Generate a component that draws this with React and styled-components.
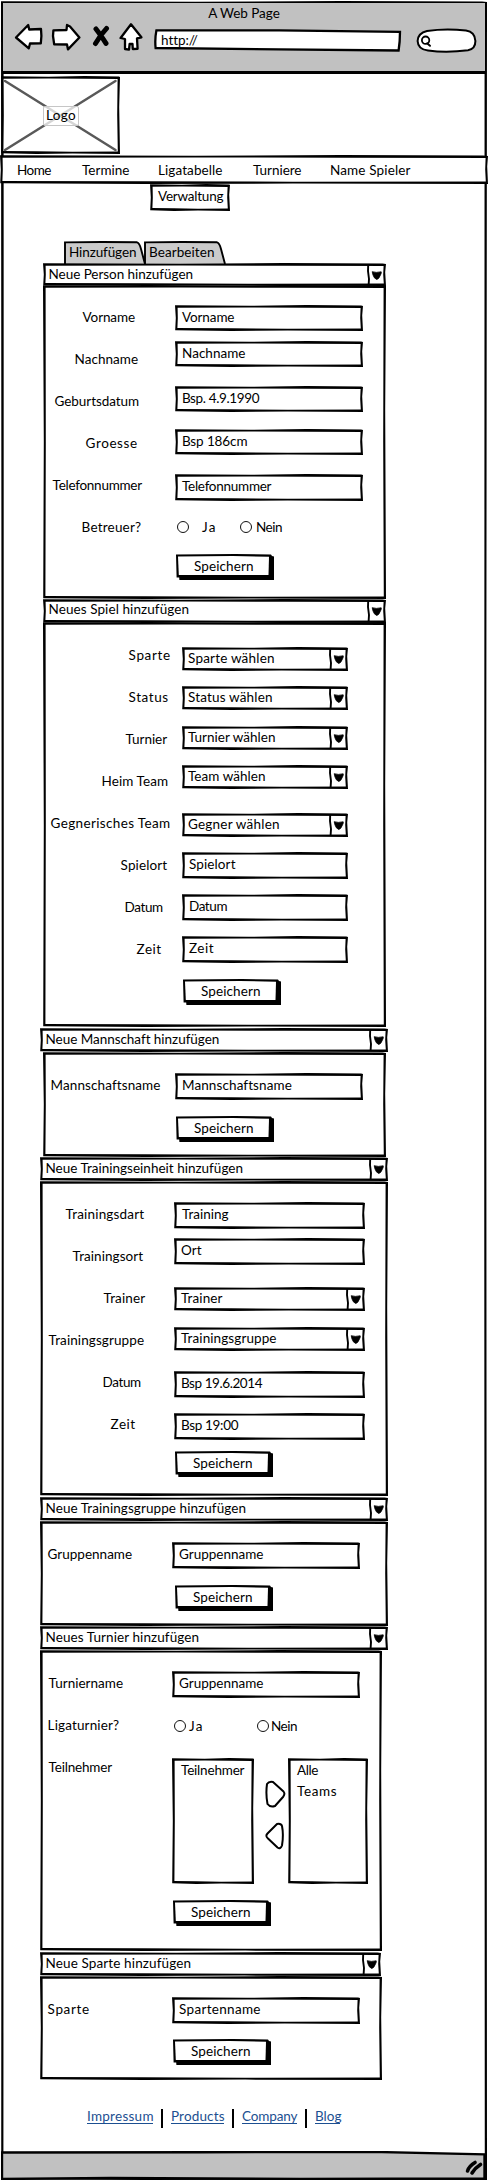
import React, { useLayoutEffect, useRef, useState } from "react";
import styled, { createGlobalStyle, css } from "styled-components";

const INK = "#000";
const CHROME = "#c1c1c1";

const GlobalStyle = createGlobalStyle`
  * { box-sizing: border-box; }
  body { margin: 0; background: #fff; }
  #root {
    font-family: Lato, "Open Sans", sans-serif;
    font-size: 13.5px;
    line-height: 16px;
    color: #000;
  }
`;

/* A slightly uneven hand-inked outline around a filled box. */
const inked = css`
  isolation: isolate;
  position: relative;
  &::before, &::after { content: ""; position: absolute; inset: 0; z-index: -1; }
  &::before {
    background: ${INK};
    clip-path: polygon(0 0.3px, 40% 0.8px, 70% 0, 99% 0.5px, 100% 1px, calc(100% - 0.8px) 40%, 100% 100%, 60% calc(100% - 0.4px), 30% 100%, 0.2px calc(100% - 0.8px), 0.8px 50%);
  }
  &::after {
    background: ${(p) => p.$fill || "#fff"};
    clip-path: polygon(2.6px 2.8px, 40% 2.4px, 70% 2.8px, calc(100% - 2.4px) 3px, calc(100% - 2.8px) 50%, calc(100% - 2.2px) calc(100% - 2.6px), 60% calc(100% - 2.3px), 30% calc(100% - 2.7px), 2.4px calc(100% - 3px), 2.8px 50%);
  }
`;

const Glyphs = styled.span`
  display: inline-block;
  flex: none;
  white-space: pre;
`;

/* Text tracked out to a given width. */
function Text({ w, children }) {
  const ref = useRef(null);
  const [tracking, setTracking] = useState(0);
  useLayoutEffect(() => {
    const natural = ref.current.getBoundingClientRect().width;
    setTracking((w + 1.5 - natural) / (String(children).length - 1));
  }, [w, children]);
  return <Glyphs ref={ref} style={{ letterSpacing: tracking }}>{children}</Glyphs>;
}

const Page = styled.div`
  ${inked}
  width: 488px;
  height: 2180px;
  display: flex;
  flex-direction: column;
  align-items: flex-start;
  &::before, &::after { inset: 1px 1px 0 1px; }
`;

const Chrome = styled.header`
  width: 482px;
  height: 71px;
  margin: 3px 3px 0;
  background: ${CHROME};
  border-bottom: 3px solid ${INK};
  display: flex;
  flex-direction: column;
`;

const Title = styled.div`
  height: 16px;
  margin-top: 2px;
  display: flex;
  justify-content: center;
`;

const Toolbar = styled.div`
  display: flex;
  align-items: flex-start;
  margin-left: 11px;
`;

const ToolIcon = styled.svg`
  flex: none;
  display: block;
  width: ${(p) => p.$w}px;
  height: 30px;
  margin-right: ${(p) => p.$gap}px;
  fill: #fff;
  stroke: ${INK};
  stroke-width: 2.3;
  stroke-linejoin: round;
  stroke-linecap: round;
`;

const Address = styled.svg`
  display: block;
`;

const UrlBar = styled.div`
  isolation: isolate;
  position: relative;
  width: 248px;
  height: 23px;
  margin: 8px 14px 0 0;
  padding: 3px 0 0 7px;
  > svg { position: absolute; inset: 0; z-index: -1; }
`;

const SearchPill = styled.div`
  width: 61px;
  height: 25px;
  margin-top: 7px;
`;

const Logo = styled.div`
  ${inked}
  width: 119px;
  height: 78px;
  margin: 2px 0 0 1px;
  display: flex;
  align-items: center;
  justify-content: center;
  > svg { position: absolute; inset: 0; z-index: 0; }
`;

const LogoLabel = styled.div`
  position: relative;
  z-index: 1;
  width: 36px;
  height: 20px;
  margin: 1px 0 0 1px;
  border: 1px solid #c6c6c6;
  border-radius: 2px;
  background: rgba(255, 255, 255, 0.75);
  display: flex;
  justify-content: center;
`;

const Nav = styled.nav`
  ${inked}
  width: 488px;
  height: 29px;
  margin-top: 1px;
  padding: 7px 0 0 17px;
  display: flex;
  gap: 30px;
`;

const NavItem = styled.a`
  width: ${(p) => p.$w}px;
  display: flex;
`;

const SubMenu = styled.div`
  ${inked}
  width: 80px;
  height: 27px;
  margin: 0 0 0 150px;
  padding: 4px 0 0 8px;
`;

const Tabs = styled.div`
  display: flex;
  height: 23px;
  margin: 30px 0 -1px 64px;
`;

const Tab = styled.div`
  isolation: isolate;
  position: relative;
  width: 80px;
  padding: 3px 0 0 5px;
  > svg { position: absolute; left: 0; top: 0; z-index: -1; }
`;

const SectionBar = styled.div`
  ${inked}
  width: ${(p) => p.$w}px;
  height: ${(p) => p.$h}px;
  margin: ${(p) => p.$gap || 0}px 0 0 ${(p) => p.$x}px;
  padding: ${(p) => p.$pad}px 0 0 5.5px;
  display: flex;
  justify-content: space-between;
  &::before, &::after { inset: 0 0 ${(p) => (p.$h > 23 ? 0 : -1)}px 0; }
`;

const Panel = styled.section`
  ${inked}
  width: ${(p) => p.$w}px;
  height: ${(p) => p.$h}px;
  margin-left: ${(p) => p.$x}px;
  display: flex;
  flex-direction: column;
`;

const Row = styled.div`
  display: flex;
  align-items: flex-start;
  height: ${(p) => p.$h}px;
  margin-top: ${(p) => p.$gap}px;
`;

const LabelCell = styled.div`
  flex: none;
  display: flex;
  width: ${(p) => p.$col}px;
  padding-left: ${(p) => p.$dx + 0.6}px;
  margin-top: ${(p) => p.$dy}px;
`;

const Input = styled.div`
  ${inked}
  width: ${(p) => p.$w}px;
  height: ${(p) => p.$h}px;
  padding: 4px 0 0 ${(p) => p.$pad}px;
`;

const Select = styled(Input)`
  padding-top: 3px;
  display: flex;
  justify-content: space-between;
`;

const Cap = styled.svg`
  flex: none;
  display: block;
  width: 19px;
  height: 24px;
  margin-top: -${(p) => p.$up}px;
`;

const SaveBox = styled.button`
  isolation: isolate;
  position: relative;
  width: 98px;
  height: 26px;
  padding: 4px 0 0;
  margin-left: ${(p) => p.$shift}px;
  border: 0;
  background: none;
  font: inherit;
  color: inherit;
  display: flex;
  justify-content: flex-start;
  > span { margin-left: 18px; }
  &::before, &::after { content: ""; position: absolute; z-index: -1; }
  &::before {
    inset: 0;
    background: ${INK};
    clip-path: polygon(0 0.4px, 60% 0, calc(100% - 3px) 0.5px, calc(100% - 2px) 2px, 100% 2.4px, 100% 100%, 3.4px 100%, 3.2px calc(100% - 2.4px), 0.6px calc(100% - 2.6px));
  }
  &::after {
    inset: 2px 5px 5px 2px;
    background: #fff;
    clip-path: polygon(0 0.5px, 60% 0, 100% 0.8px, calc(100% - 0.5px) 100%, 58% calc(100% + 0.4px), 0.8px 100%);
  }
`;

const Radio = styled.span`
  flex: none;
  width: 12px;
  height: 12px;
  border: 1.2px solid #111;
  border-radius: 50%;
  background: #fff;
`;

const Option = styled.label`
  display: flex;
  gap: ${(p) => p.$gap}px;
  width: ${(p) => p.$w}px;
  padding-left: ${(p) => p.$pad}px;
  > span:last-child { margin-top: -2px; }
`;

const ListBox = styled.div`
  ${inked}
  width: ${(p) => p.$w}px;
  height: 126px;
  padding: 4px 0 0 9px;
  display: flex;
  flex-direction: column;
  align-items: flex-start;
  gap: 5px;
`;

const Movers = styled.div`
  width: 34px;
  padding: 22px 0 0 11px;
  display: flex;
  flex-direction: column;
  gap: 14px;
  > svg { display: block; fill: #fff; stroke: ${INK}; stroke-width: 2; stroke-linejoin: round; }
`;

const Links = styled.div`
  display: flex;
  height: 20px;
  margin: 28px 0 0 87px;
`;

const Link = styled.a`
  color: #1c4f91;
  height: 16px;
  border-bottom: 1px solid #1c4f91;
  width: ${(p) => p.$w}px;
`;

const Divider = styled.span`
  width: 2px;
  height: 19px;
  margin: 1px 8px 0;
  background: ${INK};
`;

const StatusBar = styled.footer`
  width: 485px;
  height: 29px;
  margin: auto 0 0 1px;
  display: flex;
  > svg { display: block; }
`;

function Arrow({ up = 3 }) {
  return (
    <Cap $up={up} viewBox="0 0 19 24">
      <path d="M1.2 1.5 L1 8 L2 16 L1.6 22.5" fill="none" stroke="#000" strokeWidth="1.9" />
      <path d="M5.2 8.7 Q9 10 14.2 8.8 Q14.8 9.6 13.3 12.4 Q11.7 16.4 9.6 16.4 Q7 15.4 6 12 Z" fill="#000" stroke="#000" strokeWidth="0.8" strokeLinejoin="round" />
    </Cap>
  );
}

function Bar({ x, w, h, gap, pad = 3, tw, children }) {
  return (
    <SectionBar $x={x} $w={w} $h={h} $gap={gap} $pad={pad}>
      <Text w={tw}>{children}</Text>
      <Arrow up={pad} />
    </SectionBar>
  );
}

function Field({ gap, col, dx, dy, label, lw, value, vw, w, h = 27, pad = 7, select }) {
  const Box = select ? Select : Input;
  const height = select ? 24 : h;
  return (
    <Row $gap={gap} $h={height}>
      <LabelCell $col={col} $dx={dx} $dy={dy}><Text w={lw}>{label}</Text></LabelCell>
      <Box $w={w} $h={height} $pad={select ? pad - 1 : pad}>
        <Text w={vw}>{value}</Text>
        {select && <Arrow />}
      </Box>
    </Row>
  );
}

function Save({ gap, x }) {
  return (
    <Row $gap={gap} $h={26}>
      <SaveBox $shift={x}><Text w={58}>Speichern</Text></SaveBox>
    </Row>
  );
}

function TabShape() {
  return (
    <svg width="82" height="23" viewBox="0 0 82 23">
      <path d="M1 23 L1 1.4 L38 1 L73 1.3 Q75.5 2 77 8 L81 23" fill="#cbcbcb" stroke="#000" strokeWidth="1.9" />
    </svg>
  );
}

export default function App() {
  return (
    <>
      <GlobalStyle />
      <Page>
        <Chrome>
          <Title><Text w={70}>A Web Page</Text></Title>
          <Toolbar>
            <ToolIcon $w={29} $gap={8} viewBox="0 0 29 30">
              <path d="M2 16.5 L14.2 4 L15.2 8.5 L27 8 L27.4 15 L26.8 22.3 L16 22.5 L14.8 27.3 Z" />
            </ToolIcon>
            <ToolIcon $w={30} $gap={11} viewBox="0 0 30 30">
              <path d="M2.4 9.3 L15.5 9 L16 4 L19 5.5 L28.4 16.5 L17 28.4 L16 23.5 L3.2 23.3 L2 15 Z" />
            </ToolIcon>
            <ToolIcon $w={18} $gap={9} viewBox="0 0 18 30">
              <path d="M4 8 Q8 13 14 22.4 M14.5 7.5 L9 14 L3.5 22.5" fill="none" strokeWidth="5" />
            </ToolIcon>
            <ToolIcon $w={24} $gap={11} viewBox="0 0 24 30">
              <path d="M12 3.3 L22.4 16.3 L18 17.4 L18.6 27.8 L13.8 28 L13.5 23 L10.6 23 L10 28.6 L6 28 L6 18 L1.6 17 Z" />
            </ToolIcon>
            <UrlBar>
              <svg width="248" height="23" viewBox="0 0 248 23">
                <path d="M2.4 1.4 L125 1.3 L246 2.8 Q246 13 244.6 21.5 L125 20.3 L1.6 19 Q0.7 10 2.4 1.4 Z" fill="#fff" stroke="#000" strokeWidth="2.3" />
              </svg>
              <Text w={35}>http://</Text>
            </UrlBar>
            <SearchPill>
              <Address width="61" height="25" viewBox="0 0 61 25">
                <path d="M11 3 Q30 0.2 50 2.6 Q59 4 59.4 13 Q59.4 21 52 22.2 Q31 25 12 22.5 Q2 21.5 1.6 13 Q2 5 11 3 Z" fill="#fff" stroke="#000" strokeWidth="2" />
                <circle cx="9.6" cy="12.2" r="3.7" fill="#fff" stroke="#000" strokeWidth="1.8" />
                <path d="M11 15.3 L14 17.8" stroke="#000" strokeWidth="2" strokeLinecap="round" />
              </Address>
            </SearchPill>
          </Toolbar>
        </Chrome>

        <Logo>
          <svg width="119" height="78" viewBox="0 0 119 78">
            <path d="M4 5 L114.5 74 M114.5 5 L4 74" stroke="#595959" strokeWidth="2.5" strokeLinecap="round" />
          </svg>
          <LogoLabel><Text w={28}>Logo</Text></LogoLabel>
        </Logo>

        <Nav>
          <NavItem $w={35}><Text w={33}>Home</Text></NavItem>
          <NavItem $w={46}><Text w={46}>Termine</Text></NavItem>
          <NavItem $w={65}><Text w={63}>Ligatabelle</Text></NavItem>
          <NavItem $w={47}><Text w={47}>Turniere</Text></NavItem>
          <NavItem $w={80}><Text w={79}>Name Spieler</Text></NavItem>
        </Nav>
        <SubMenu><Text w={64}>Verwaltung</Text></SubMenu>

        <Tabs>
          <Tab><TabShape /><Text w={66}>Hinzufügen</Text></Tab>
          <Tab><TabShape /><Text w={64}>Bearbeiten</Text></Tab>
        </Tabs>

        <Bar x={43} w={343} h={22} tw={143}>Neue Person hinzufügen</Bar>
        <Panel $x={43} $w={343} $h={314}>
          <Field gap={20} h={26} col={132} w={188} dx={39} dy={4} label="Vorname" lw={51} value="Vorname" vw={51} />
          <Field gap={10} h={26} col={132} w={188} dx={31} dy={10} label="Nachname" lw={62} value="Nachname" vw={62} />
          <Field gap={19} h={26} col={132} w={188} dx={11} dy={7} label="Geburtsdatum" lw={83} value="Bsp. 4.9.1990" vw={76} />
          <Field gap={17} h={26} col={132} w={188} dx={42} dy={6} label="Groesse" lw={50} value="Bsp 186cm" vw={64} />
          <Field gap={19} h={27} col={132} w={188} dx={9} dy={3} label="Telefonnummer" lw={88} value="Telefonnummer" vw={88} />
          <Row $gap={20} $h={13}>
            <LabelCell $col={132} $dx={38} $dy={-2}><Text w={58}>Betreuer?</Text></LabelCell>
            <Option $pad={2} $gap={13} $w={65}><Radio /><Text w={12}>Ja</Text></Option>
            <Option $pad={0} $gap={4} $w={60}><Radio /><Text w={25}>Nein</Text></Option>
          </Row>
          <Save gap={20} x={133} />
        </Panel>

        <Bar x={43} w={343} h={23} pad={2} tw={139}>Neues Spiel hinzufügen</Bar>
        <Panel $x={43} $w={343} $h={405}>
          <Field gap={25} select col={139} w={166} dx={85} dy={0} label="Sparte" lw={40} value="Sparte wählen" vw={85} />
          <Field gap={15} select col={139} w={166} dx={85} dy={3} label="Status" lw={38} value="Status wählen" vw={83} />
          <Field gap={16} select col={139} w={166} dx={82} dy={5} label="Turnier" lw={40} value="Turnier wählen" vw={86} />
          <Field gap={15} select col={139} w={166} dx={58} dy={8} label="Heim Team" lw={65} value="Team wählen" vw={76} />
          <Field gap={24} select col={139} w={166} dx={7} dy={2} label="Gegnerisches Team" lw={118} value="Gegner wählen" vw={90} />
          <Field gap={15} col={139} w={166} dx={77} dy={5} label="Spielort" lw={45} value="Spielort" vw={45} />
          <Field gap={15} col={139} w={166} dx={81} dy={5} label="Datum" lw={37} value="Datum" vw={37} />
          <Field gap={15} col={139} w={166} dx={93} dy={5} label="Zeit" lw={23} value="Zeit" vw={23} />
          <Save gap={16} x={140} />
        </Panel>

        <Bar x={40} w={348} h={24} gap={1} tw={172}>Neue Mannschaft hinzufügen</Bar>
        <Panel $x={43} $w={343} $h={105}>
          <Field gap={21} col={132} w={188} dx={7} dy={4} label="Mannschaftsname" lw={108} value="Mannschaftsname" vw={108} />
          <Save gap={16} x={133} />
        </Panel>

        <Bar x={40} w={348} h={24} tw={196}>Neue Trainingseinheit hinzufügen</Bar>
        <Panel $x={40} $w={348} $h={315}>
          <Field gap={21} col={134} w={191} dx={25} dy={4} pad={8} label="Trainingsdart" lw={77} value="Training" vw={45} />
          <Field gap={9} col={134} w={191} dx={32} dy={10} label="Trainingsort" lw={69} value="Ort" vw={19} />
          <Field gap={22} select col={134} w={191} dx={63} dy={3} pad={8} label="Trainer" lw={40} value="Trainer" vw={40} />
          <Field gap={16} select col={134} w={191} dx={8} dy={5} pad={8} label="Trainingsgruppe" lw={94} value="Trainingsgruppe" vw={94} />
          <Field gap={20} col={134} w={191} dx={62} dy={3} label="Datum" lw={37} value="Bsp 19.6.2014" vw={80} />
          <Field gap={15} col={134} w={191} dx={70} dy={3} label="Zeit" lw={23} value="Bsp 19:00" vw={56} />
          <Save gap={11} x={135} />
        </Panel>

        <Bar x={40} w={348} h={24} gap={1} tw={199}>Neue Trainingsgruppe hinzufügen</Bar>
        <Panel $x={40} $w={348} $h={105}>
          <Field gap={21} col={132} w={188} dx={7} dy={4} label="Gruppenname" lw={83} value="Gruppenname" vw={83} />
          <Save gap={16} x={135} />
        </Panel>

        <Bar x={40} w={348} h={24} tw={152}>Neues Turnier hinzufügen</Bar>
        <Panel $x={40} $w={342} $h={301}>
          <Field gap={21} col={132} w={188} dx={8} dy={4} label="Turniername" lw={73} value="Gruppenname" vw={83} />
          <Row $gap={22} $h={13}>
            <LabelCell $col={132} $dx={7} $dy={-3}><Text w={70}>Ligaturnier?</Text></LabelCell>
            <Option $pad={2} $gap={3} $w={85}><Radio /><Text w={12}>Ja</Text></Option>
            <Option $pad={0} $gap={2} $w={60}><Radio /><Text w={25}>Nein</Text></Option>
          </Row>
          <Row $gap={25} $h={126}>
            <LabelCell $col={132} $dx={8} $dy={1}><Text w={62}>Teilnehmer</Text></LabelCell>
            <ListBox $w={82}><Text w={62}>Teilnehmer</Text></ListBox>
            <Movers>
              <svg width="21" height="28" viewBox="0 0 21 28">
                <path d="M2 4 Q4 1 8 2 L18.5 11.5 Q20.5 14 18 17 L10 26 Q5 27.5 2.5 24 Q0.6 14 2 4 Z" />
              </svg>
              <svg width="21" height="28" viewBox="0 0 21 28">
                <path d="M17 4 Q16 1.2 12 2 L2.5 11.5 Q0 14 3 16.5 L12.5 25.5 Q15.5 27.5 17 23.5 Q18.8 13 17 4 Z" />
              </svg>
            </Movers>
            <ListBox $w={80}>
              <Text w={20}>Alle</Text>
              <Text w={38}>Teams</Text>
            </ListBox>
          </Row>
          <Save gap={16} x={133} />
        </Panel>

        <Bar x={40} w={341} h={24} gap={1} tw={144}>Neue Sparte hinzufügen</Bar>
        <Panel $x={40} $w={342} $h={104}>
          <Field gap={21} col={132} w={188} dx={7} dy={4} label="Sparte" lw={40} value="Spartenname" vw={80} />
          <Save gap={15} x={133} />
        </Panel>

        <Links>
          <Link $w={66}><Text w={65}>Impressum</Text></Link>
          <Divider />
          <Link $w={53}><Text w={52}>Products</Text></Link>
          <Divider />
          <Link $w={55}><Text w={54}>Company</Text></Link>
          <Divider />
          <Link $w={25}><Text w={25}>Blog</Text></Link>
        </Links>

        <StatusBar>
          <svg width="486" height="29" viewBox="0 0 486 29">
            <path d="M1 1.5 L200 1.2 L370 0.8 L484.5 3.4 L484.5 27.5 L300 28 L110 27 L1 28 Z" fill="#c1c1c1" stroke="#000" strokeWidth="2.4" />
            <path d="M467.5 20 Q469 15 475 11.5 M472 22 Q475 17 480.5 13.5" fill="none" stroke="#000" strokeWidth="3.6" strokeLinecap="round" />
          </svg>
        </StatusBar>
      </Page>
    </>
  );
}
